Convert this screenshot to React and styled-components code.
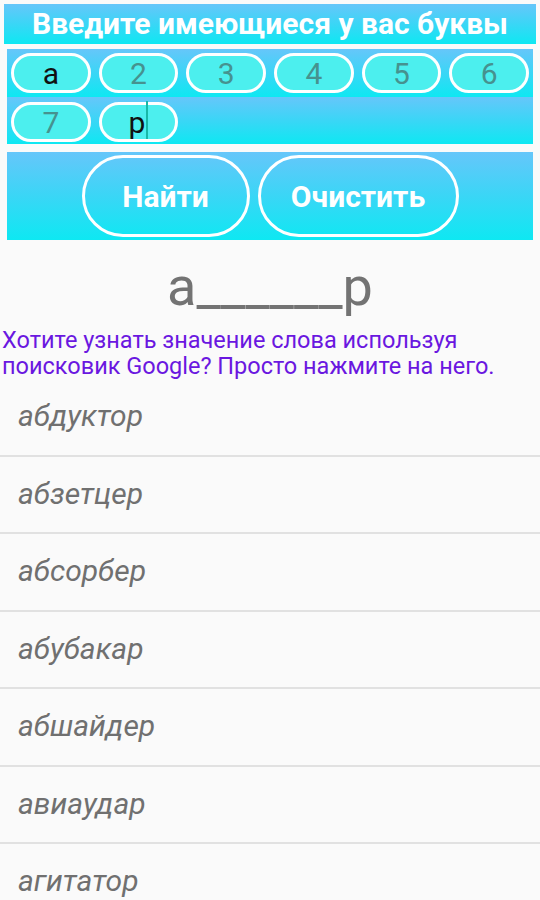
import React from "react";
import styled, { createGlobalStyle } from "styled-components";

const Global = createGlobalStyle`
  html, body { margin: 0; padding: 0; background: #fafafa; }
  body { font-family: Roboto, "Noto Sans", sans-serif; }
`;

const Page = styled.div`
  width: 540px;
  height: 900px;
  overflow: hidden;
  background: #fafafa;
  display: flex;
  flex-direction: column;
  & > * { flex-shrink: 0; }
`;

const sky = `linear-gradient(180deg, #66c6fa 0%, #3ad6f6 50%, #0ee8f2 100%)`;

const TitleBar = styled.div`
  margin: 4px 4px 0;
  height: 40px;
  background: ${sky};
  color: #fff;
  font-weight: 700;
  font-size: 30px;
  line-height: 40px;
  text-align: center;
  white-space: nowrap;
`;

const LettersPanel = styled.div`
  margin: 5px 7px 0;
  display: flex;
  flex-direction: column;
`;

const LetterRow = styled.div`
  display: grid;
  grid-template-columns: repeat(6, 1fr);
  align-items: start;
  height: ${(p) => p.$h}px;
  padding-top: ${(p) => p.$pt}px;
  box-sizing: border-box;
  background: ${sky};
`;

const Pill = styled.div`
  margin: 0 4px;
  height: 40px;
  box-sizing: border-box;
  border: 3px solid #fff;
  border-radius: 20px;
  background: #4cefee;
  display: flex;
  align-items: center;
  justify-content: center;
  font-size: 30px;
  color: ${(p) => (p.$filled ? "#111" : "#46928f")};
`;

const Caret = styled.span`
  display: inline-block;
  width: 2px;
  height: 38px;
  margin-left: 1px;
  background: #18b8a8;
  align-self: flex-end;
`;

const ButtonsPanel = styled.div`
  margin: 8px 7px 0;
  height: 88px;
  background: ${sky};
  display: flex;
  align-items: center;
  justify-content: center;
  gap: 8px;
`;

const ActionButton = styled.div`
  box-sizing: border-box;
  height: 82px;
  width: ${(p) => p.$w}px;
  border: 3px solid #fff;
  border-radius: 42px;
  display: flex;
  align-items: center;
  justify-content: center;
  color: #fff;
  font-weight: 700;
  font-size: 30px;
`;

const Pattern = styled.div`
  margin-top: 17px;
  text-align: center;
  font-size: 54px;
  line-height: 60px;
  color: #737373;
`;

const Hint = styled.div`
  margin-top: 10px;
  padding-left: 2px;
  font-size: 23.5px;
  line-height: 26px;
  color: #6a17e0;
  white-space: nowrap;
`;

const List = styled.div`
  display: flex;
  flex-direction: column;
`;

const Item = styled.div`
  box-sizing: border-box;
  height: 77.5px;
  flex-shrink: 0;
  border-bottom: 2px solid #e1e1e1;
  display: flex;
  align-items: center;
  padding-left: 18px;
  padding-bottom: 2px;
  font-style: italic;
  font-size: 30px;
  color: #707070;
`;

const row1 = [
  { t: "а", f: true },
  { t: "2" },
  { t: "3" },
  { t: "4" },
  { t: "5" },
  { t: "6" },
];

const words = [
  "абдуктор",
  "абзетцер",
  "абсорбер",
  "абубакар",
  "абшайдер",
  "авиаудар",
  "агитатор",
];

export default function App() {
  return (
    <Page>
      <Global />
      <TitleBar>Введите имеющиеся у вас буквы</TitleBar>
      <LettersPanel>
        <LetterRow $h={48} $pt={4}>
          {row1.map((c, i) => (
            <Pill key={i} $filled={c.f}>
              {c.t}
            </Pill>
          ))}
        </LetterRow>
        <LetterRow $h={47} $pt={5}>
          <Pill>7</Pill>
          <Pill $filled>
            р<Caret />
          </Pill>
        </LetterRow>
      </LettersPanel>
      <ButtonsPanel>
        <ActionButton $w={168}>Найти</ActionButton>
        <ActionButton $w={201}>Очистить</ActionButton>
      </ButtonsPanel>
      <Pattern>а______р</Pattern>
      <Hint>
        Хотите узнать значение слова используя
        <br />
        поисковик Google? Просто нажмите на него.
      </Hint>
      <List>
        {words.map((w) => (
          <Item key={w}>{w}</Item>
        ))}
      </List>
    </Page>
  );
}
